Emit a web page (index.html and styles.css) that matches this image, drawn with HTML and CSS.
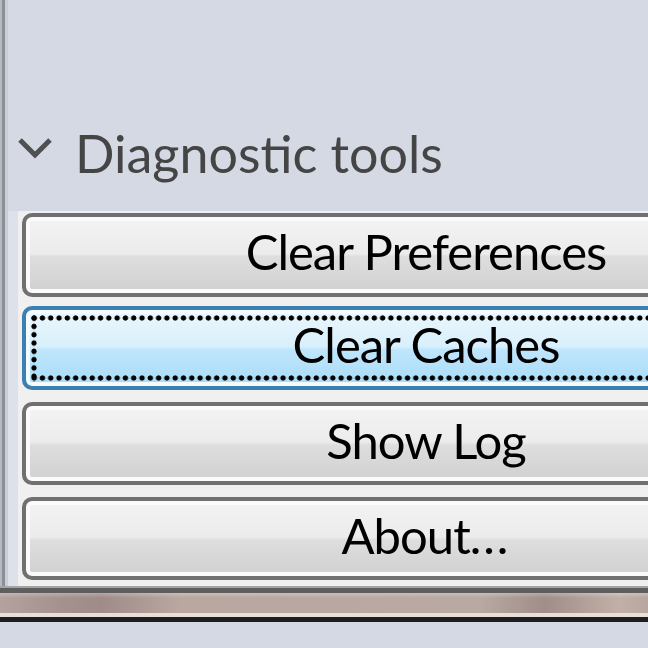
FILE: index.html
```html
<!DOCTYPE html>
<html>
<head>
<meta charset="utf-8">
<link rel="stylesheet" href="styles.css">
</head>
<body>
<div class="screen">
  <div class="window">
    <div class="edge"></div>
    <div class="panel">
      <div class="heading">
        <svg class="chevron" viewBox="0 0 36 22" width="36" height="22"><polyline points="3,3 18,18 33,3" fill="none" stroke="#505050" stroke-width="5"/></svg>
        <span class="heading-text">Diagnostic tools</span>
      </div>
      <div class="list-wrap">
        <div class="list">
          <div class="btn">Clear Preferences</div>
          <div class="btn btn-focus">Clear Caches</div>
          <div class="btn btn-short">Show Log</div>
          <div class="btn btn-short">About<span class="dots">...</span></div>
        </div>
      </div>
    </div>
  </div>
  <div class="statusbar"></div>
</div>
</body>
</html>
```

FILE: styles.css
```css
html, body {
  margin: 0;
  padding: 0;
  width: 648px;
  height: 648px;
  overflow: hidden;
  background: #d4d9e3;
}

.screen {
  width: 648px;
  height: 648px;
  overflow: hidden;
  display: flex;
  flex-direction: column;
  font-family: Lato, "Open Sans", sans-serif;
}

.window {
  display: flex;
  height: 586px;
  flex: none;
}

.edge {
  width: 8px;
  flex: none;
  background: linear-gradient(to right, #b6bac1 0, #b6bac1 2px, #8c9096 2px, #8c9096 5px, #c8cdd6 5px, #c8cdd6 8px);
}

.panel {
  flex: 1;
  display: flex;
  flex-direction: column;
  padding-top: 122px;
}

.heading {
  display: flex;
  align-items: flex-start;
  height: 62px;
}

.chevron {
  margin-left: 9px;
  margin-top: 15px;
  flex: none;
}

.heading-text {
  margin-left: 22px;
  font-size: 52px;
  line-height: 62px;
  color: #454545;
  white-space: nowrap;
}

.list-wrap {
  margin-top: 27px;
  flex: 1;
  padding-left: 10px;
  background: #dce1ea;
}

.list {
  height: 100%;
  background: #f0f0f0;
  padding: 2px 0 0 4px;
  display: flex;
  flex-direction: column;
  align-items: flex-start;
  box-sizing: border-box;
}

.btn {
  position: relative;
  flex: none;
  width: 808px;
  height: 84px;
  box-sizing: border-box;
  border: 4px solid #707070;
  border-radius: 10px;
  box-shadow: inset 0 0 0 4px #fbfbfb;
  background: linear-gradient(#f3f3f3 0%, #ececec 48%, #dedede 52%, #d0d0d0 100%);
  display: flex;
  align-items: center;
  justify-content: center;
  padding-bottom: 8px;
  font-size: 49px;
  letter-spacing: -1px;
  line-height: 62px;
  color: #000;
  white-space: nowrap;
}

.dots {
  letter-spacing: 2px;
}

.btn + .btn {
  margin-top: 12px;
}

.btn-focus {
  margin-top: 9px !important;
  border-color: #3c7fb1;
  box-shadow: inset 0 0 0 4px #f4fbfe;
  background: linear-gradient(#eaf6fd 0%, #d9f0fc 48%, #bee6fd 52%, #a9dbf6 100%);
}

.btn-focus::after {
  content: "";
  position: absolute;
  left: 4px;
  top: 4px;
  right: 4px;
  bottom: 4px;
  background-image:
    radial-gradient(circle, #000 2.3px, rgba(0,0,0,0) 3.1px),
    radial-gradient(circle, #000 2.3px, rgba(0,0,0,0) 3.1px),
    radial-gradient(circle, #000 2.3px, rgba(0,0,0,0) 3.1px),
    radial-gradient(circle, #000 2.3px, rgba(0,0,0,0) 3.1px);
  background-size: 8.3px 8.3px;
  background-repeat: repeat-x, repeat-x, repeat-y, repeat-y;
  background-position: 0 0, 0 100%, 0 0, 100% 0;
}

.btn-short {
  height: 83px;
}

.statusbar {
  flex: none;
  height: 36px;
  box-sizing: border-box;
  border-top: 2px solid #a4a4a4;
  background:
    linear-gradient(#5e5e5e 0, #5e5e5e 5px, rgba(255,255,255,0.25) 5px, rgba(255,255,255,0) 10px, rgba(0,0,0,0) 25px, #e8dfdb 25px, #e8dfdb 29px, #1e1e1e 29px, #1e1e1e 34px),
    linear-gradient(to right, #b3a29d 0, #a5928e 60px, #9f8b88 100px, #b9a7a0 180px, #b8a9a2 480px, #a18d89 545px, #c2b0a8 620px, #b6a69f 648px);
}
```
